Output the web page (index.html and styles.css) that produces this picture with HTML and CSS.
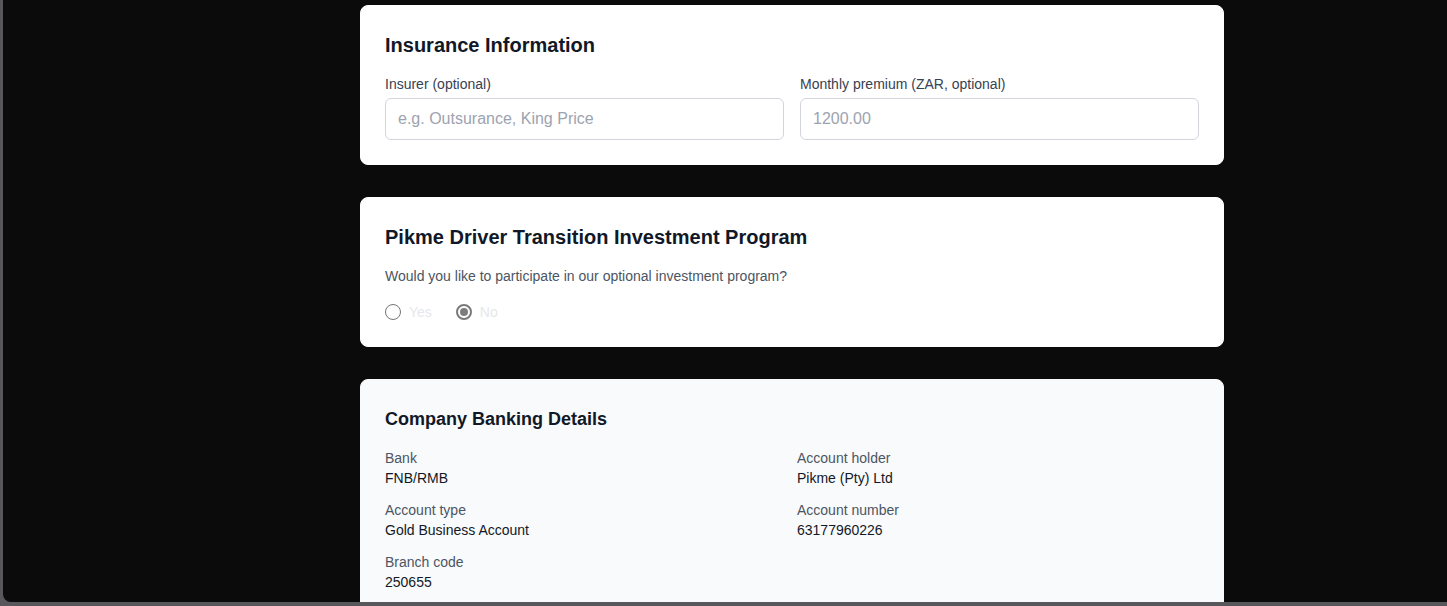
FILE: index.html
```html
<!DOCTYPE html>
<html lang="en">
<head>
<meta charset="utf-8">
<title>Driver form</title>
<link rel="stylesheet" href="styles.css">
</head>
<body>
<div class="frame">
  <main class="column">
    <section class="card">
      <h2 class="card-title">Insurance Information</h2>
      <div class="field-grid">
        <label class="field">
          <span class="field-label">Insurer (optional)</span>
          <input class="text-input" type="text" placeholder="e.g. Outsurance, King Price">
        </label>
        <label class="field">
          <span class="field-label">Monthly premium (ZAR, optional)</span>
          <input class="text-input" type="text" placeholder="1200.00">
        </label>
      </div>
    </section>

    <section class="card card-program">
      <h2 class="card-title">Pikme Driver Transition Investment Program</h2>
      <p class="question">Would you like to participate in our optional investment program?</p>
      <div class="radio-row">
        <label class="radio-option">
          <input class="radio" type="radio" name="invest" disabled>
          <span class="radio-text">Yes</span>
        </label>
        <label class="radio-option">
          <input class="radio" type="radio" name="invest" checked disabled>
          <span class="radio-text">No</span>
        </label>
      </div>
    </section>

    <section class="card card-muted">
      <h3 class="card-subtitle">Company Banking Details</h3>
      <div class="details-grid">
        <div class="detail">
          <div class="detail-label">Bank</div>
          <div class="detail-value">FNB/RMB</div>
        </div>
        <div class="detail">
          <div class="detail-label">Account holder</div>
          <div class="detail-value">Pikme (Pty) Ltd</div>
        </div>
        <div class="detail">
          <div class="detail-label">Account type</div>
          <div class="detail-value">Gold Business Account</div>
        </div>
        <div class="detail">
          <div class="detail-label">Account number</div>
          <div class="detail-value">63177960226</div>
        </div>
        <div class="detail">
          <div class="detail-label">Branch code</div>
          <div class="detail-value">250655</div>
        </div>
      </div>
    </section>
  </main>
</div>
</body>
</html>
```
FILE: styles.css
```css
* { box-sizing: border-box; }
html, body { margin: 0; padding: 0; }
body {
  background: #58585c;
  font-family: "Liberation Sans", Arial, sans-serif;
  height: 606px;
  overflow: hidden;
}
.frame {
  margin-left: 3px;
  height: 602px;
  background: #0b0b0b;
  border-bottom-left-radius: 8px;
  overflow: hidden;
  padding: 5px 0 0 357px;
}
.column {
  width: 864px;
  display: flex;
  flex-direction: column;
  gap: 32px;
}
.card {
  background: #ffffff;
  border: 1px solid #ffffff;
  border-radius: 8px;
  padding: 24px;
}
.card-program { padding-bottom: 23px; }
.card-muted {
  background: #f9fafb;
  border-color: #f9fafb;
  padding-bottom: 40px;
}
.card-title {
  margin: 0 0 15px;
  padding-top: 1px;
  font-size: 20px;
  line-height: 28px;
  font-weight: 700;
  color: #111827;
}
.field-grid {
  display: grid;
  grid-template-columns: 1fr 1fr;
  column-gap: 16px;
}
.field { display: flex; flex-direction: column; }
.field-label {
  font-size: 14px;
  line-height: 20px;
  color: #374151;
  margin-bottom: 4px;
}
.text-input {
  height: 42px;
  border: 1px solid #d1d5db;
  border-radius: 6px;
  padding: 0 12px;
  font-family: inherit;
  font-size: 16px;
  color: #111827;
  background: #fff;
  outline: none;
}
.text-input::placeholder { color: #9ca3af; }
.question {
  margin: 3px 0 0;
  font-size: 14px;
  line-height: 20px;
  color: #4b5563;
}
.radio-row {
  display: flex;
  gap: 24px;
  margin-top: 15px;
  height: 22px;
  align-items: center;
}
.radio-option { display: flex; align-items: center; gap: 8px; }
.radio {
  appearance: none;
  -webkit-appearance: none;
  margin: 0;
  width: 16px;
  height: 16px;
  border: 1px solid #767676;
  border-radius: 50%;
  background: #fff;
  display: grid;
  place-items: center;
}
.radio:checked { border: 2px solid #7a7a7a; }
.radio:checked::after {
  content: "";
  width: 8px;
  height: 8px;
  border-radius: 50%;
  background: #7d7d7d;
}
.radio-text {
  font-size: 14px;
  line-height: 20px;
  color: #e5e7eb;
}
.card-subtitle {
  margin: 0 0 15px;
  padding-top: 1px;
  font-size: 18px;
  line-height: 28px;
  font-weight: 700;
  color: #111827;
}
.details-grid {
  display: grid;
  grid-template-columns: 1fr 1fr;
  column-gap: 10px;
  row-gap: 12px;
}
.detail-label {
  font-size: 14px;
  line-height: 20px;
  color: #4b5563;
}
.detail-value {
  font-size: 14px;
  line-height: 20px;
  color: #111827;
}
```
